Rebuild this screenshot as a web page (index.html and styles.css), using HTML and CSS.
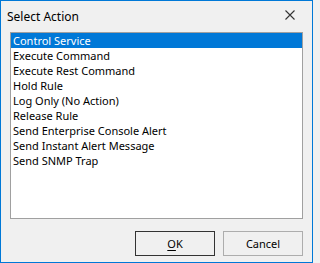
FILE: index.html
```html
<!DOCTYPE html>
<html>
<head>
<meta charset="utf-8">
<link rel="stylesheet" href="styles.css">
</head>
<body>
<div class="window">
  <div class="titlebar">
    <span class="title">Select Action</span>
    <svg class="close" width="10" height="10" viewBox="0 0 10 10">
      <path d="M0.5 0.5 L9.5 9.5 M9.5 0.5 L0.5 9.5" stroke="#333" stroke-width="1.1" fill="none"/>
    </svg>
  </div>
  <div class="content">
    <ul class="listbox">
      <li class="item selected">Control Service</li>
      <li class="item">Execute Command</li>
      <li class="item">Execute Rest Command</li>
      <li class="item">Hold Rule</li>
      <li class="item">Log Only (No Action)</li>
      <li class="item">Release Rule</li>
      <li class="item">Send Enterprise Console Alert</li>
      <li class="item">Send Instant Alert Message</li>
      <li class="item">Send SNMP Trap</li>
    </ul>
    <div class="buttons">
      <button class="btn default"><u>O</u>K</button>
      <button class="btn">Cancel</button>
    </div>
  </div>
</div>
</body>
</html>
```
FILE: styles.css
```css
html, body {
  margin: 0;
  padding: 0;
  background: #f0f0f0;
}
.window {
  box-sizing: border-box;
  width: 313px;
  height: 263px;
  border: 1px solid #0078d7;
  background: #f0f0f0;
  display: flex;
  flex-direction: column;
  font-family: "Noto Sans", "Open Sans", sans-serif;
  font-size: 11px;
  color: #000;
}
.titlebar {
  height: 30px;
  display: flex;
  align-items: center;
  justify-content: space-between;
  padding: 0 17px 0 6px;
}
.title {
  font-size: 12px;
  margin-top: 1px;
}
.close {
  display: block;
  margin-bottom: 3px;
}
.content {
  flex: 1;
  display: flex;
  flex-direction: column;
  padding: 1px 9px 6px 9px;
}
.listbox {
  list-style: none;
  margin: 0;
  padding: 0;
  height: 187px;
  box-sizing: border-box;
  border: 1px solid #a0a0a0;
  background: #fff;
}
.item {
  height: 15px;
  line-height: 15px;
  padding-left: 2px;
  white-space: nowrap;
}
.item.selected {
  background: #0078d7;
  color: #fff;
}
.buttons {
  margin-top: 12px;
  display: flex;
  justify-content: flex-end;
  gap: 8px;
}
.btn {
  box-sizing: border-box;
  width: 80px;
  height: 25px;
  border: 1px solid #adadad;
  background: #f0f0f0;
  font-family: "Noto Sans", "Open Sans", sans-serif;
  font-size: 11px;
  color: #000;
  padding: 0;
  border-radius: 0;
}
.btn.default {
  border-color: #333;
}
.btn u {
  text-decoration: underline;
  text-underline-offset: 2px;
}
```
